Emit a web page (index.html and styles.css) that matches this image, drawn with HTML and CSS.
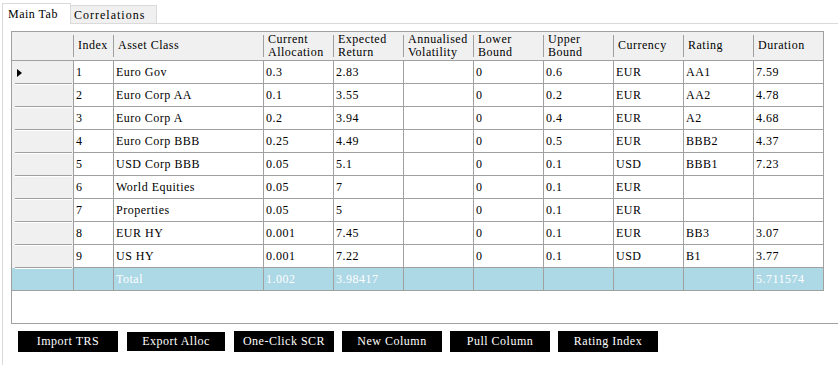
FILE: index.html
```html
<!DOCTYPE html>
<html>
<head>
<meta charset="utf-8">
<link rel="stylesheet" href="styles.css">
</head>
<body>
<div class="tabstrip">
  <div class="tab active">Main Tab</div>
  <div class="tab inactive">Correlations</div>
</div>
<div class="page">
  <div class="dgv">
    <div class="grid">
      <div class="hc"></div>
      <div class="hc">Index</div>
      <div class="hc">Asset Class</div>
      <div class="hc">Current<br>Allocation</div>
      <div class="hc">Expected<br>Return</div>
      <div class="hc">Annualised<br>Volatility</div>
      <div class="hc">Lower<br>Bound</div>
      <div class="hc">Upper<br>Bound</div>
      <div class="hc">Currency</div>
      <div class="hc">Rating</div>
      <div class="hc last">Duration</div>

      <div class="rh first"><span class="arrow"></span></div>
      <div class="c">1</div><div class="c">Euro Gov</div><div class="c">0.3</div><div class="c">2.83</div><div class="c"></div><div class="c">0</div><div class="c">0.6</div><div class="c">EUR</div><div class="c">AA1</div><div class="c">7.59</div>

      <div class="rh"></div>
      <div class="c">2</div><div class="c">Euro Corp AA</div><div class="c">0.1</div><div class="c">3.55</div><div class="c"></div><div class="c">0</div><div class="c">0.2</div><div class="c">EUR</div><div class="c">AA2</div><div class="c">4.78</div>

      <div class="rh"></div>
      <div class="c">3</div><div class="c">Euro Corp A</div><div class="c">0.2</div><div class="c">3.94</div><div class="c"></div><div class="c">0</div><div class="c">0.4</div><div class="c">EUR</div><div class="c">A2</div><div class="c">4.68</div>

      <div class="rh"></div>
      <div class="c">4</div><div class="c">Euro Corp BBB</div><div class="c">0.25</div><div class="c">4.49</div><div class="c"></div><div class="c">0</div><div class="c">0.5</div><div class="c">EUR</div><div class="c">BBB2</div><div class="c">4.37</div>

      <div class="rh"></div>
      <div class="c">5</div><div class="c">USD Corp BBB</div><div class="c">0.05</div><div class="c">5.1</div><div class="c"></div><div class="c">0</div><div class="c">0.1</div><div class="c">USD</div><div class="c">BBB1</div><div class="c">7.23</div>

      <div class="rh"></div>
      <div class="c">6</div><div class="c">World Equities</div><div class="c">0.05</div><div class="c">7</div><div class="c"></div><div class="c">0</div><div class="c">0.1</div><div class="c">EUR</div><div class="c"></div><div class="c"></div>

      <div class="rh"></div>
      <div class="c">7</div><div class="c">Properties</div><div class="c">0.05</div><div class="c">5</div><div class="c"></div><div class="c">0</div><div class="c">0.1</div><div class="c">EUR</div><div class="c"></div><div class="c"></div>

      <div class="rh"></div>
      <div class="c">8</div><div class="c">EUR HY</div><div class="c">0.001</div><div class="c">7.45</div><div class="c"></div><div class="c">0</div><div class="c">0.1</div><div class="c">EUR</div><div class="c">BB3</div><div class="c">3.07</div>

      <div class="rh"></div>
      <div class="c">9</div><div class="c">US HY</div><div class="c">0.001</div><div class="c">7.22</div><div class="c"></div><div class="c">0</div><div class="c">0.1</div><div class="c">USD</div><div class="c">B1</div><div class="c">3.77</div>

      <div class="rh total"></div>
      <div class="c t"></div><div class="c t">Total</div><div class="c t">1.002</div><div class="c t">3.98417</div><div class="c t"></div><div class="c t"></div><div class="c t"></div><div class="c t"></div><div class="c t"></div><div class="c t">5.711574</div>
    </div>
  </div>
  <div class="buttons">
    <div class="btn">Import TRS</div>
    <div class="btn focus">Export Alloc</div>
    <div class="btn">One-Click SCR</div>
    <div class="btn">New Column</div>
    <div class="btn">Pull Column</div>
    <div class="btn">Rating Index</div>
  </div>
</div>
</body>
</html>
```
FILE: styles.css
```css
html, body {
  margin: 0;
  padding: 0;
  background: #fff;
}
body {
  width: 838px;
  height: 365px;
  overflow: hidden;
  font-family: "Liberation Serif", "DejaVu Serif", serif;
  font-size: 12px;
  letter-spacing: 0.5px;
  color: #000;
}
.tabstrip {
  display: flex;
  align-items: flex-end;
  height: 23px;
  padding-left: 2px;
}
.tab {
  position: relative;
  z-index: 1;
  box-sizing: border-box;
  white-space: nowrap;
}
.tab.active {
  width: 69px;
  height: 21px;
  margin-bottom: -1px;
  background: #fff;
  border: 1px solid #dadada;
  border-bottom: none;
  padding: 3px 0 0 5px;
  line-height: 14px;
}
.tab.inactive {
  width: 86px;
  height: 18px;
  background: #f0f0f0;
  border-top: 1px solid #dadada;
  border-right: 1px solid #dadada;
  padding: 2px 0 0 3px;
  line-height: 14px;
  letter-spacing: 1px;
}
.page {
  margin-left: 2px;
  border-top: 1px solid #dadada;
  border-left: 1px solid #dadada;
  height: 341px;
}
.dgv {
  margin: 7px 0 0 8px;
  height: 292px;
  border-left: 1px solid #a0a0a0;
  border-bottom: 1px solid #a0a0a0;
}
.grid {
  display: grid;
  grid-template-columns: 62px 40px 150px repeat(8, 70px);
  grid-template-rows: 29px;
  grid-auto-rows: 23px;
  width: max-content;
  border-top: 1px solid #a0a0a0;
}
.grid > div {
  box-sizing: border-box;
  display: flex;
  align-items: center;
  white-space: nowrap;
  overflow: hidden;
}
.hc {
  padding-left: 4px;
  line-height: 13.4px;
  border-bottom: 1px solid #a0a0a0;
  background: linear-gradient(#a0a0a0, #a0a0a0) right center / 1px 22px no-repeat, #f0f0f0;
}
.hc.last {
  border-right: 1px solid #a0a0a0;
  background: #f0f0f0;
}
.c {
  padding-left: 2px;
  background: #fff;
  border-right: 1px solid #a0a0a0;
  border-bottom: 1px solid #a0a0a0;
}
.c.t {
  background: #add8e6;
  color: #fff;
}
.rh {
  border-right: 1px solid #a0a0a0;
  background:
    linear-gradient(#a0a0a0, #a0a0a0) 3px 100% / 57px 1px no-repeat,
    linear-gradient(#fff, #fff) 3px 0 / 57px 1px no-repeat,
    #f0f0f0;
}
.rh.first {
  background:
    linear-gradient(#a0a0a0, #a0a0a0) 3px 100% / 57px 1px no-repeat,
    #f0f0f0;
}
.rh.total {
  border-bottom: 1px solid #a0a0a0;
  background:
    linear-gradient(#fff, #fff) 3px 0 / 57px 1px no-repeat,
    #add8e6;
}
.arrow {
  display: block;
  width: 0;
  height: 0;
  margin-left: 5px;
  border-left: 5px solid #000;
  border-top: 4px solid transparent;
  border-bottom: 4px solid transparent;
}
.buttons {
  display: flex;
  gap: 8px;
  margin: 7px 0 0 15px;
}
.btn {
  box-sizing: border-box;
  width: 100px;
  height: 21px;
  background: #000;
  color: #fff;
  display: flex;
  align-items: center;
  justify-content: center;
  white-space: nowrap;
}
.btn.focus {
  border: 1px solid #fff;
}
```
